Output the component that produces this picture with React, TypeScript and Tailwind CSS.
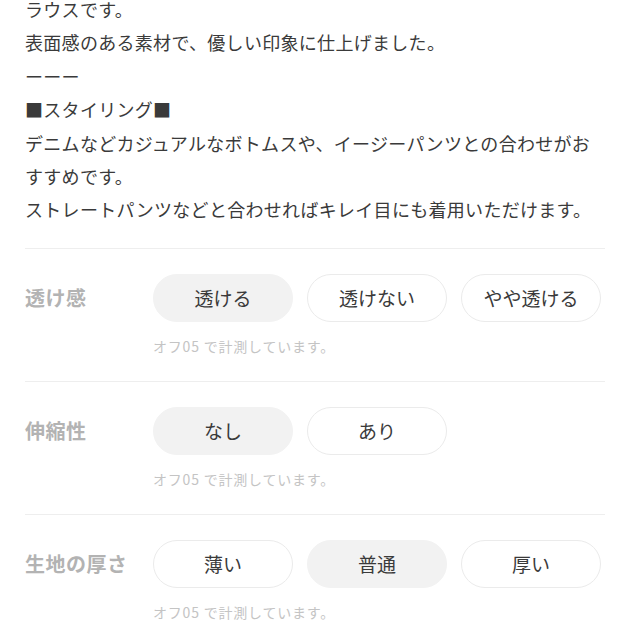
import React from "react";

const font = { fontFamily: '"Noto Sans CJK JP", "Noto Sans", sans-serif' };

type Row = { label: string; options: string[]; selected: number };

const rows: Row[] = [
  { label: "透け感", options: ["透ける", "透けない", "やや透ける"], selected: 0 },
  { label: "伸縮性", options: ["なし", "あり"], selected: 0 },
  { label: "生地の厚さ", options: ["薄い", "普通", "厚い"], selected: 1 },
];

export default function App() {
  return (
    <div className="w-[627px] h-[627px] overflow-hidden bg-white" style={font}>
      <div className="px-[25px]">
        <div className="mt-[-7px] text-[18px] leading-[33.4px] tracking-[0.3px] text-[#3a3a3a]">
          <p>ラウスです。</p>
          <p>表面感のある素材で、優しい印象に仕上げました。</p>
          <p>ーーー</p>
          <p>■スタイリング■</p>
          <p>デニムなどカジュアルなボトムスや、イージーパンツとの合わせがお</p>
          <p>すすめです。</p>
          <p>ストレートパンツなどと合わせればキレイ目にも着用いただけます。</p>
        </div>
        <div className="mt-[21px] w-[580px]">
          {rows.map((r) => (
            <div key={r.label} className="border-t border-[#eeeeee] pt-[25px] pb-[26px]">
              <div className="flex items-center">
                <div className="w-[128px] text-[20px] font-bold text-[#b3b3b3] tracking-[0.5px]">{r.label}</div>
                <div className="flex gap-[14px]">
                  {r.options.map((o, i) => (
                    <div
                      key={o}
                      className={
                        i === r.selected
                          ? "w-[140px] h-[48px] rounded-full bg-[#f2f2f2] border border-[#f2f2f2] flex items-center justify-center text-[19px] text-[#3a3a3a]"
                          : "w-[140px] h-[48px] rounded-full bg-white border border-[#ebebeb] flex items-center justify-center text-[19px] text-[#3a3a3a]"
                      }
                    >
                      {o}
                    </div>
                  ))}
                </div>
              </div>
              <div className="ml-[128px] mt-[15px] text-[14px] leading-[18px] tracking-[0.8px] text-[#c4c4c4]">オフ05 で計測しています。</div>
            </div>
          ))}
        </div>
      </div>
    </div>
  );
}
